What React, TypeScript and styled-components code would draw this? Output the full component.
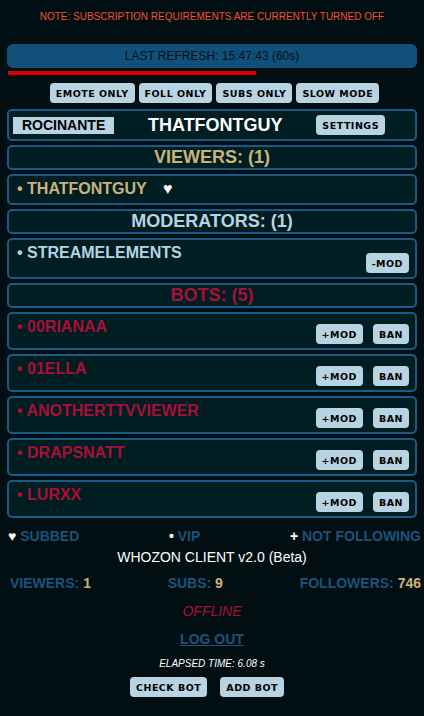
import React from 'react';
import styled, { createGlobalStyle } from 'styled-components';

const colors = {
  bg: '#010f12',
  card: '#001e21',
  border: '#1b5a86',
  light: '#b8d4e2',
  tan: '#cbb27b',
  crimson: '#a90f38',
  blue: '#1c527c',
  note: '#f4502c',
};

const GlobalStyle = createGlobalStyle`
  html, body {
    margin: 0;
    padding: 0;
    background: ${colors.bg};
    font-family: 'Liberation Sans', Arial, sans-serif;
  }
`;

const bots = ['00RIANAA', '01ELLA', 'ANOTHERTTVVIEWER', 'DRAPSNATT', 'LURXX'];

const App = () => {
  return (
    <>
      <GlobalStyle />
      <Page>
        <Note>NOTE: SUBSCRIPTION REQUIREMENTS ARE CURRENTLY TURNED OFF</Note>
        <RefreshBar>LAST REFRESH: 15:47:43 (60s)</RefreshBar>
        <Progress style={{ width: 248 }} />
        <ModeRow>
          <Button>EMOTE ONLY</Button>
          <Button>FOLL ONLY</Button>
          <Button>SUBS ONLY</Button>
          <Button>SLOW MODE</Button>
        </ModeRow>

        <Cards>
          <HeaderCard>
            <BotTag>ROCINANTE</BotTag>
            <Channel>THATFONTGUY</Channel>
            <Button>SETTINGS</Button>
          </HeaderCard>

          <SectionTitle $color={colors.tan}>VIEWERS: (1)</SectionTitle>
          <UserRow $compact>
            <UserName $color={colors.tan}>
              • THATFONTGUY <Heart>♥</Heart>
            </UserName>
          </UserRow>

          <SectionTitle $color={colors.light}>MODERATORS: (1)</SectionTitle>
          <UserRow>
            <UserName $color={colors.light}>• STREAMELEMENTS</UserName>
            <Actions $offset={9}>
              <Button>-MOD</Button>
            </Actions>
          </UserRow>

          <SectionTitle $color={colors.crimson}>BOTS: (5)</SectionTitle>
          {bots.map((name) => (
            <UserRow key={name}>
              <UserName $color={colors.crimson}>• {name}</UserName>
              <Actions $offset={6}>
                <Button>+MOD</Button>
                <Button>BAN</Button>
              </Actions>
            </UserRow>
          ))}
        </Cards>

        <Legend>
          <span>
            <White>♥</White> SUBBED
          </span>
          <span>
            <White>•</White> VIP
          </span>
          <span>
            <White>+</White> NOT FOLLOWING
          </span>
        </Legend>

        <Version>WHOZON CLIENT v2.0 (Beta)</Version>

        <Stats>
          <span>
            VIEWERS: <Value>1</Value>
          </span>
          <span>
            SUBS: <Value>9</Value>
          </span>
          <span>
            FOLLOWERS: <Value>746</Value>
          </span>
        </Stats>

        <Offline>OFFLINE</Offline>
        <LogOut href="#">LOG OUT</LogOut>
        <Elapsed>ELAPSED TIME: 6.08 s</Elapsed>
        <BottomRow>
          <Button>CHECK BOT</Button>
          <Button>ADD BOT</Button>
        </BottomRow>
      </Page>
    </>
  );
};

const Page = styled.div`
  padding: 0 7px 18px;
  display: flex;
  flex-direction: column;
  min-height: 716px;
  box-sizing: border-box;
`;

const Note = styled.div`
  margin-top: 10px;
  text-align: center;
  color: ${colors.note};
  font-size: 10px;
  line-height: 13px;
`;

const RefreshBar = styled.div`
  margin-top: 21px;
  height: 24px;
  line-height: 24px;
  background: #10507b;
  border-radius: 6px;
  color: #06121a;
  font-size: 12px;
  text-align: center;
`;

const Progress = styled.div`
  margin: 3px 0 0 1px;
  height: 4px;
  background: #d80000;
`;

const Button = styled.button`
  font-family: 'DejaVu Sans', Verdana, sans-serif;
  font-weight: 900;
  font-size: 9.5px;
  letter-spacing: 0.5px;
  color: #000;
  background: ${colors.light};
  border: none;
  border-radius: 4px;
  height: 20px;
  padding: 0 6px;
  cursor: pointer;
`;

const ModeRow = styled.div`
  margin-top: 8px;
  padding-left: 5px;
  display: flex;
  justify-content: center;
  gap: 4px;
`;

const Cards = styled.div`
  margin-top: 6px;
  display: flex;
  flex-direction: column;
  gap: 4px;
`;

const Card = styled.div`
  background: ${colors.card};
  border: 2px solid ${colors.border};
  border-radius: 5px;
  box-sizing: border-box;
`;

const HeaderCard = styled(Card)`
  height: 32px;
  display: flex;
  align-items: center;
  justify-content: space-between;
  padding: 0 30px 0 4px;
`;

const BotTag = styled.div`
  background: ${colors.light};
  color: #000;
  font-weight: bold;
  font-size: 14px;
  height: 17px;
  line-height: 17px;
  padding: 0 9px;
`;

const Channel = styled.div`
  color: #fff;
  font-weight: bold;
  font-size: 18px;
`;

const SectionTitle = styled(Card)<{ $color: string }>`
  height: 25px;
  line-height: 21px;
  text-align: center;
  font-weight: bold;
  font-size: 18px;
  color: ${({ $color }) => $color};
`;

const UserRow = styled(Card)<{ $compact?: boolean }>`
  display: flex;
  justify-content: space-between;
  align-items: flex-start;
  padding: ${({ $compact }) => ($compact ? '4px 8px 5px' : '4px 6px 4px 8px')};
`;

const UserName = styled.div<{ $color: string }>`
  color: ${({ $color }) => $color};
  font-weight: bold;
  font-size: 16px;
  line-height: 18px;
  white-space: pre;
`;

const Heart = styled.span`
  color: #fff;
  margin-left: 12px;
`;

const Actions = styled.div<{ $offset: number }>`
  display: flex;
  gap: 10px;
  margin-top: ${({ $offset }) => $offset}px;
`;

const Legend = styled.div`
  margin-top: 10px;
  display: flex;
  justify-content: space-between;
  color: ${colors.blue};
  font-weight: bold;
  font-size: 14px;
  line-height: 17px;
  padding: 0 0 0 1px;
  margin-right: -4px;
`;

const White = styled.span`
  color: #fff;
`;

const Version = styled.div`
  margin-top: 4px;
  text-align: center;
  color: #fff;
  font-size: 14px;
  line-height: 17px;
`;

const Stats = styled.div`
  margin-top: 9px;
  display: flex;
  justify-content: space-between;
  padding: 0 0 0 3px;
  margin-right: -4px;
  color: ${colors.blue};
  font-weight: bold;
  font-size: 14px;
  line-height: 17px;
`;

const Value = styled.span`
  color: ${colors.tan};
`;

const Offline = styled.div`
  margin-top: 10px;
  text-align: center;
  color: ${colors.crimson};
  font-style: italic;
  font-size: 14px;
  line-height: 18px;
`;

const LogOut = styled.a`
  align-self: center;
  margin-top: 10px;
  color: ${colors.blue};
  font-weight: bold;
  font-size: 14px;
  line-height: 18px;
  text-decoration: underline;
`;

const Elapsed = styled.div`
  margin-top: 10px;
  text-align: center;
  color: #fff;
  font-style: italic;
  font-size: 10px;
  line-height: 12px;
`;

const BottomRow = styled.div`
  margin-top: 7px;
  padding-right: 10px;
  display: flex;
  justify-content: center;
  gap: 13px;
`;

export default App;
